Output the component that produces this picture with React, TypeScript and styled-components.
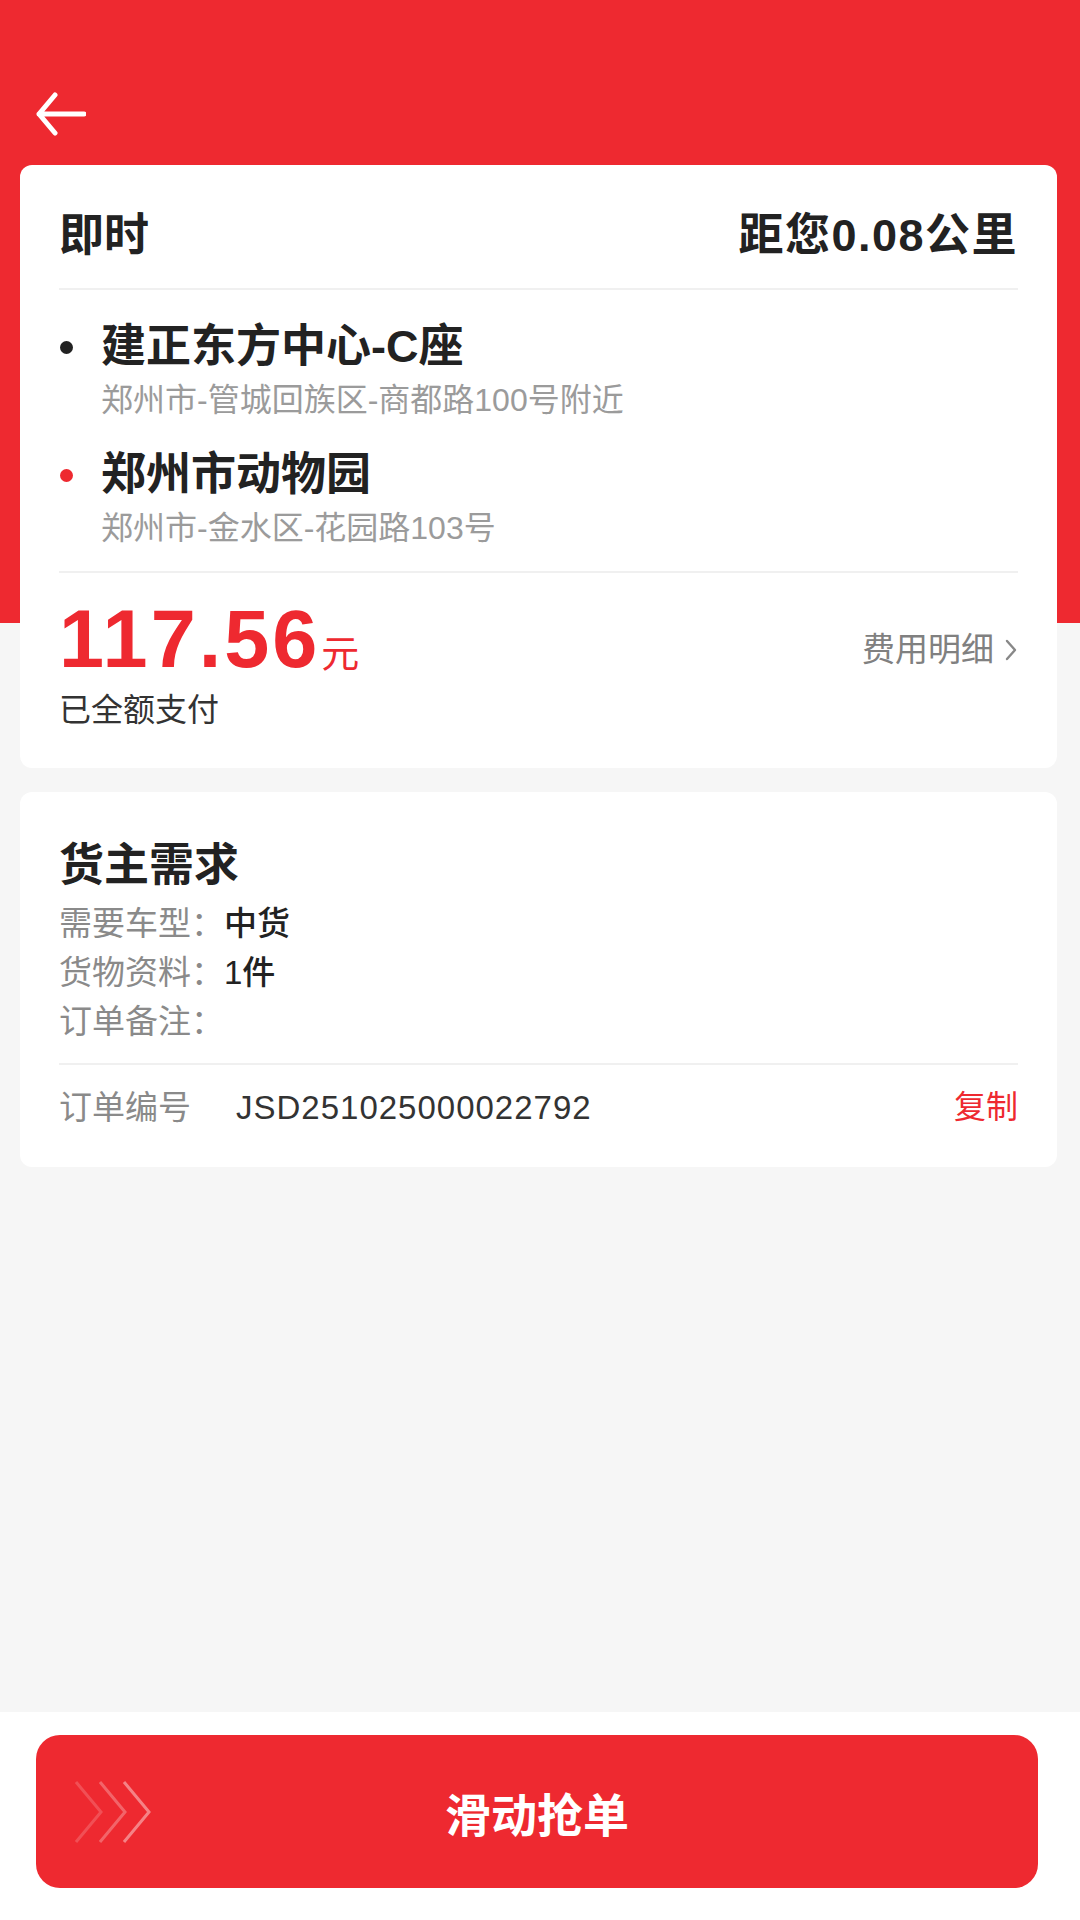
import React from "react";
import styled, { createGlobalStyle } from "styled-components";

const RED = "#ee2930";

const order = {
    type: "即时",
    distance: "距您0.08公里",
    from: { name: "建正东方中心-C座", addr: "郑州市-管城回族区-商都路100号附近" },
    to: { name: "郑州市动物园", addr: "郑州市-金水区-花园路103号" },
    price: "117.56",
    payState: "已全额支付",
    needs: [
        { label: "需要车型：", value: "中货" },
        { label: "货物资料：", value: "1件" },
        { label: "订单备注：", value: "" },
    ],
    no: "JSD251025000022792",
};

const App = () => {
    return (
        <Page>
            <GlobalStyle />
            <Header>
                <BackButton aria-label="返回">
                    <svg width="50" height="44" viewBox="0 0 50 44" fill="none">
                        <path
                            d="M19 3 L3 22 L19 41 M3 22 H48"
                            stroke="#fff"
                            strokeWidth="5"
                            strokeLinecap="round"
                            strokeLinejoin="round"
                        />
                    </svg>
                </BackButton>
            </Header>

            <Content>
                <Card>
                    <TopRow>
                        <Heading>{order.type}</Heading>
                        <Heading $spaced>{order.distance}</Heading>
                    </TopRow>
                    <Divider />
                    <Stops>
                        <Stop>
                            <StopName>
                                <Dot $color="#222" />
                                {order.from.name}
                            </StopName>
                            <StopAddr>{order.from.addr}</StopAddr>
                        </Stop>
                        <Stop>
                            <StopName>
                                <Dot $color={RED} />
                                {order.to.name}
                            </StopName>
                            <StopAddr>{order.to.addr}</StopAddr>
                        </Stop>
                    </Stops>
                    <Divider />
                    <PriceRow>
                        <Price>
                            {order.price}
                            <Unit>元</Unit>
                        </Price>
                        <DetailLink>
                            费用明细
                            <svg width="14" height="24" viewBox="0 0 14 24" fill="none">
                                <path
                                    d="M3 3 L11 12 L3 21"
                                    stroke="#888"
                                    strokeWidth="2.4"
                                    strokeLinecap="round"
                                    strokeLinejoin="round"
                                />
                            </svg>
                        </DetailLink>
                    </PriceRow>
                    <PayState>{order.payState}</PayState>
                </Card>

                <Card>
                    <SectionTitle>货主需求</SectionTitle>
                    <NeedList>
                        {order.needs.map((n) => (
                            <NeedRow key={n.label}>
                                <Label>{n.label}</Label>
                                <Value>{n.value}</Value>
                            </NeedRow>
                        ))}
                    </NeedList>
                    <Divider />
                    <OrderRow>
                        <Label>订单编号</Label>
                        <OrderNo>{order.no}</OrderNo>
                        <CopyButton>复制</CopyButton>
                    </OrderRow>
                </Card>
            </Content>

            <BottomBar>
                <SlideButton>
                    <Arrows width="80" height="64" viewBox="0 0 80 64" fill="none">
                        <polyline points="2,2 27,32 2,62" stroke="#fff" strokeOpacity="0.18" strokeWidth="3" />
                        <polyline points="26,2 51,32 26,62" stroke="#fff" strokeOpacity="0.28" strokeWidth="3" />
                        <polyline points="50,2 75,32 50,62" stroke="#fff" strokeOpacity="0.42" strokeWidth="3" />
                    </Arrows>
                    <SlideText>滑动抢单</SlideText>
                </SlideButton>
            </BottomBar>
        </Page>
    );
};

export default App;

const GlobalStyle = createGlobalStyle`
    * {
        box-sizing: border-box;
    }
    body {
        margin: 0;
        font-family: "Liberation Sans", "Noto Sans CJK SC", sans-serif;
        color: #222;
    }
`;

const Page = styled.div`
    min-height: 1920px;
    display: flex;
    flex-direction: column;
    background: linear-gradient(${RED} 0 623px, #f6f6f6 623px);
`;

const Header = styled.header`
    height: 165px;
    padding: 92px 0 0 36px;
`;

const BackButton = styled.button`
    display: block;
    padding: 0;
    border: 0;
    background: none;
    cursor: pointer;
`;

const Content = styled.main`
    flex: 1;
    display: flex;
    flex-direction: column;
    gap: 24px;
    padding: 0 23px 0 20px;
`;

const Card = styled.section`
    background: #fff;
    border-radius: 12px;
    padding: 0 39px;
`;

const TopRow = styled.div`
    display: flex;
    justify-content: space-between;
    align-items: center;
    padding: 47px 0 28px;
`;

const Heading = styled.div<{ $spaced?: boolean }>`
    font-size: 45px;
    line-height: 48px;
    font-weight: 700;
    color: #222;
    letter-spacing: ${(p) => (p.$spaced ? "1.5px" : "0")};
`;

const Divider = styled.div`
    height: 2px;
    background: #f0f0f0;
`;

const Stops = styled.div`
    display: flex;
    flex-direction: column;
    gap: 25px;
    padding: 29px 0 21px;
`;

const Stop = styled.div`
    display: flex;
    flex-direction: column;
    gap: 3px;
`;

const StopName = styled.div`
    display: flex;
    align-items: center;
    font-size: 45px;
    line-height: 56px;
    font-weight: 700;
    color: #222;
`;

const Dot = styled.span<{ $color: string }>`
    width: 13px;
    height: 13px;
    border-radius: 50%;
    background: ${(p) => p.$color};
    margin: 0 28px 0 1px;
    flex-shrink: 0;
`;

const StopAddr = styled.div`
    padding-left: 42px;
    font-size: 32px;
    line-height: 44px;
    color: #9b9b9b;
`;

const PriceRow = styled.div`
    display: flex;
    justify-content: space-between;
    align-items: center;
    padding-top: 26px;
`;

const Price = styled.div`
    font-size: 81px;
    line-height: 80px;
    font-weight: 700;
    letter-spacing: 3px;
    color: ${RED};
`;

const Unit = styled.span`
    font-size: 38px;
    line-height: 1;
    font-weight: 400;
    letter-spacing: 0;
    margin-left: 1px;
`;

const DetailLink = styled.div`
    display: flex;
    align-items: center;
    gap: 10px;
    margin-top: 22px;
    font-size: 33px;
    line-height: 44px;
    color: #808080;
`;

const PayState = styled.div`
    padding: 9px 0 36px;
    font-size: 32px;
    line-height: 44px;
    color: #333;
`;

const SectionTitle = styled.h2`
    margin: 0;
    padding-top: 46px;
    font-size: 45px;
    line-height: 56px;
    font-weight: 700;
    color: #222;
`;

const NeedList = styled.div`
    padding: 5px 0 17px;
`;

const NeedRow = styled.div`
    display: flex;
    font-size: 33px;
    line-height: 49px;
`;

const Label = styled.span`
    color: #8a8a8a;
`;

const Value = styled.span`
    color: #222;
    font-weight: 500;
`;

const OrderRow = styled.div`
    display: flex;
    align-items: center;
    padding: 18px 0 35px;
    font-size: 33px;
    line-height: 49px;
`;

const OrderNo = styled.span`
    flex: 1;
    margin-left: 45px;
    letter-spacing: 1px;
    color: #333;
`;

const CopyButton = styled.span`
    font-size: 32px;
    color: ${RED};
    cursor: pointer;
`;

const BottomBar = styled.footer`
    background: #fff;
    padding: 23px 42px 32px 36px;
`;

const SlideButton = styled.div`
    height: 153px;
    border-radius: 24px;
    background: ${RED};
    display: grid;
    grid-template-columns: 1fr auto 1fr;
    align-items: center;
`;

const Arrows = styled.svg`
    margin-left: 38px;
`;

const SlideText = styled.div`
    font-size: 46px;
    font-weight: 700;
    color: #fff;
`;
